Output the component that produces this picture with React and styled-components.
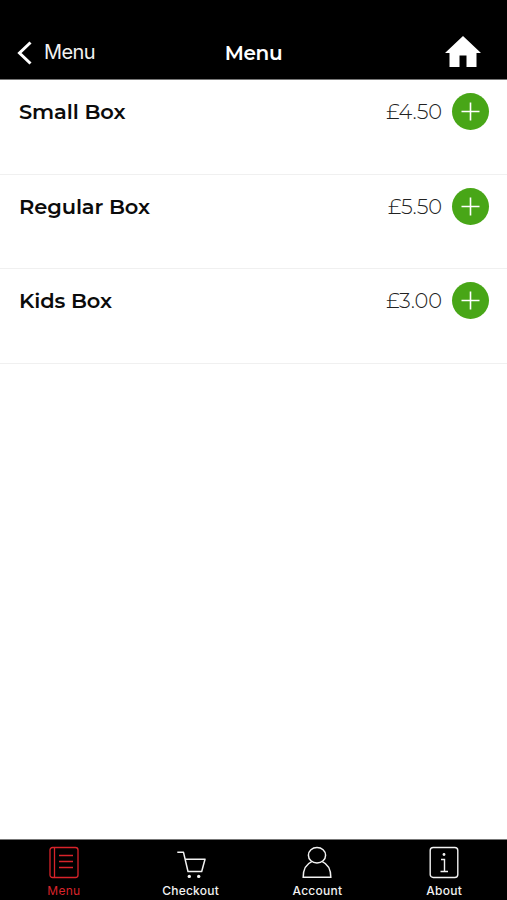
import React from 'react';
import styled, { createGlobalStyle } from 'styled-components';

const GlobalStyle = createGlobalStyle`
  * {
    box-sizing: border-box;
  }
  body {
    margin: 0;
    background: #fff;
  }
`;

const Screen = styled.div`
  display: flex;
  flex-direction: column;
  width: 100%;
  height: 100vh;
  overflow: hidden;
  background: #fff;
  font-family: 'Montserrat', 'Inter', sans-serif;
`;

const Header = styled.header`
  display: grid;
  grid-template-columns: 1fr auto 1fr;
  align-items: center;
  height: 80px;
  padding: 26px 26px 0 17px;
  background: #000;
  border-bottom: 1px solid #777;
  color: #fff;
`;

const BackButton = styled.button`
  display: flex;
  align-items: center;
  gap: 12px;
  padding: 0;
  border: 0;
  background: none;
  color: #f2f2f2;
  font-family: 'Inter', sans-serif;
  font-size: 20px;
  line-height: 27px;
  letter-spacing: -0.6px;
`;

const Title = styled.h1`
  margin: 2px 0 0 9px;
  font-size: 20px;
  line-height: 25px;
  font-weight: 600;
  letter-spacing: -0.4px;
`;

const HomeButton = styled.button`
  display: flex;
  justify-self: end;
  margin-bottom: 1px;
  padding: 0;
  border: 0;
  background: none;
`;

const List = styled.ul`
  flex: 1;
  margin: 0;
  padding: 0;
  list-style: none;
`;

const Item = styled.li`
  display: flex;
  align-items: flex-start;
  height: 94.5px;
  padding: 13.3px 18px 0 19px;
  border-bottom: 1px solid #f0f0f0;
`;

const ItemName = styled.span`
  flex: 1;
  color: #0b0b0b;
  font-size: 21px;
  line-height: 37px;
  font-weight: 600;
  letter-spacing: -0.1px;
`;

const Price = styled.span`
  margin-right: 10px;
  color: #222;
  font-size: 21px;
  line-height: 37px;
  font-weight: 300;
  letter-spacing: -0.1px;
`;

const AddButton = styled.button`
  display: flex;
  align-items: center;
  justify-content: center;
  width: 37px;
  height: 37px;
  padding: 0;
  border: 0;
  border-radius: 50%;
  background: #48a617;
`;

const TabBar = styled.nav`
  display: grid;
  grid-template-columns: repeat(4, 1fr);
  height: 61px;
  background: #000;
  border-top: 1px solid #777;
`;

const Tab = styled.a`
  display: flex;
  flex-direction: column;
  align-items: center;
  padding: 6px 0 0 1px;
  color: ${(props) => (props.$active ? '#d8232a' : '#f2f2f2')};
`;

const TabLabel = styled.span`
  margin-top: 4px;
  font-family: 'Inter', sans-serif;
  font-size: 12px;
  line-height: 16px;
  font-weight: ${(props) => (props.$active ? 400 : 500)};
  letter-spacing: 0.25px;
`;

const BackIcon = () => (
  <svg width="15" height="24" viewBox="0 0 15 24" fill="none" stroke="#fff" strokeWidth="3">
    <path d="M13.5 1.5L2.5 12l11 10.5" />
  </svg>
);

const HomeIcon = () => (
  <svg width="36" height="32" viewBox="0 0 36 32" fill="#fff">
    <path d="M18 0L36 17h-4.5V31H21.5V19.5h-7V31H4.5V17H0z" />
  </svg>
);

const PlusIcon = () => (
  <svg width="19" height="19" viewBox="0 0 19 19" stroke="#fff" strokeWidth="1.6">
    <path d="M9.5 0.5v18M0.5 9.5h18" />
  </svg>
);

const MenuIcon = () => (
  <svg width="30" height="33" viewBox="0 0 30 33" fill="none" stroke="currentColor" strokeWidth="1.3">
    <rect x="1" y="1.5" width="28" height="30" rx="2.5" />
    <path d="M5.5 1.5v30M10 9.5h14M10 15.5h14M10 21.5h14" />
  </svg>
);

const CartIcon = () => (
  <svg width="30" height="33" viewBox="0 0 30 33" fill="none" stroke="currentColor" strokeWidth="1.5">
    <path d="M1.3 6.3h6.2L12 25.5h13.7L29 13.3H9.2" strokeLinejoin="round" />
    <circle cx="13.3" cy="30.4" r="1.7" fill="currentColor" stroke="none" />
    <circle cx="22.7" cy="30.4" r="1.7" fill="currentColor" stroke="none" />
  </svg>
);

const AccountIcon = () => (
  <svg width="30" height="33" viewBox="0 0 30 33" fill="none" stroke="currentColor" strokeWidth="1.5">
    <ellipse cx="15" cy="9.2" rx="8.6" ry="7.8" />
    <path d="M9.8 15.6C4 18 1.2 23 1.2 31.3h27.6C28.8 23 26 18 20.2 15.6" />
  </svg>
);

const AboutIcon = () => (
  <svg width="30" height="33" viewBox="0 0 30 33" fill="none" stroke="currentColor" strokeWidth="1.4">
    <rect x="1.2" y="1.5" width="27.6" height="30" rx="3" />
    <path d="M12 13.5h3.5v12M11.5 25.5h7.5" />
    <circle cx="15" cy="8.5" r="1.4" fill="currentColor" stroke="none" />
  </svg>
);

const items = [
  { name: 'Small Box', price: '£4.50' },
  { name: 'Regular Box', price: '£5.50' },
  { name: 'Kids Box', price: '£3.00' },
];

const tabs = [
  { label: 'Menu', icon: MenuIcon, active: true },
  { label: 'Checkout', icon: CartIcon },
  { label: 'Account', icon: AccountIcon },
  { label: 'About', icon: AboutIcon },
];

const App = () => {
  return (
    <Screen>
      <GlobalStyle />
      <Header>
        <BackButton>
          <BackIcon />
          Menu
        </BackButton>
        <Title>Menu</Title>
        <HomeButton aria-label="Home">
          <HomeIcon />
        </HomeButton>
      </Header>
      <List>
        {items.map((item) => (
          <Item key={item.name}>
            <ItemName>{item.name}</ItemName>
            <Price>{item.price}</Price>
            <AddButton aria-label="Add">
              <PlusIcon />
            </AddButton>
          </Item>
        ))}
      </List>
      <TabBar>
        {tabs.map(({ label, icon: Icon, active }) => (
          <Tab key={label} $active={active}>
            <Icon />
            <TabLabel $active={active}>{label}</TabLabel>
          </Tab>
        ))}
      </TabBar>
    </Screen>
  );
};

export default App;
